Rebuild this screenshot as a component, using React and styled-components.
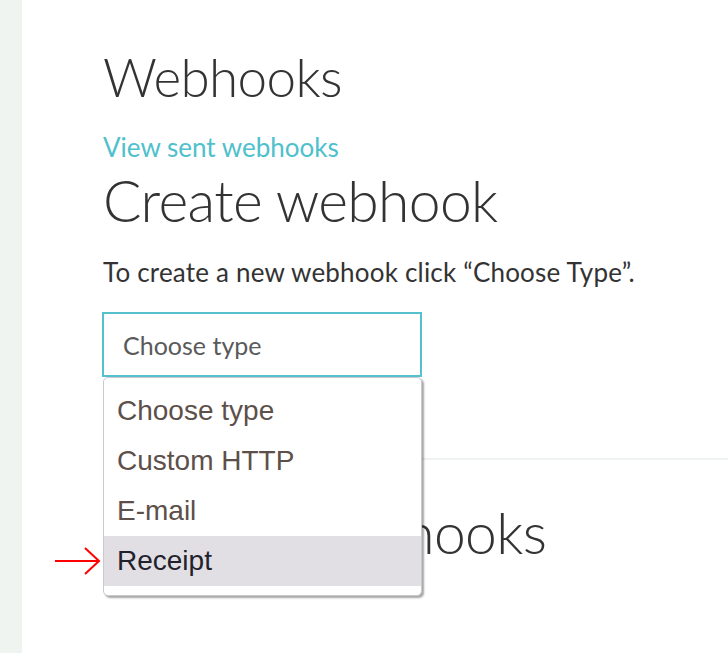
import React from 'react';
import styled, { createGlobalStyle } from 'styled-components';

const GlobalStyle = createGlobalStyle`
  html, body {
    margin: 0;
    padding: 0;
    background: #fff;
  }
  body {
    font-family: Lato, 'Open Sans', sans-serif;
    color: #333;
  }
`;

// Layout
const Page = styled.div`
  display: flex;
  min-height: 653px;
  overflow: hidden;
`;

const Sidebar = styled.div`
  flex: 0 0 22px;
  background: #eff4f1;
`;

const Main = styled.div`
  flex: 1;
  padding: 45px 0 0 81px;
`;

const Title = styled.h1`
  font-family: Lato, sans-serif;
  font-weight: 300;
  font-size: ${p => p.size}px;
  line-height: 1.2;
  margin: ${p => p.gap || 0}px 0 0;
  color: #333;
  letter-spacing: -0.65px;
  white-space: nowrap;
`;

const Link = styled.a`
  display: block;
  margin: 23px 0 0;
  font-family: Lato, sans-serif;
  font-size: 26px;
  line-height: 1.2;
  color: #4fc0cc;
  text-decoration: none;
`;

const Intro = styled.p`
  margin: 23px 0 24px;
  font-family: Lato, sans-serif;
  font-size: 26px;
  line-height: 1.2;
  color: #333;
  letter-spacing: 0.2px;
`;

// Select with its open list
const SelectWrap = styled.div`
  position: relative;
  width: 320px;
  margin-left: -1px;
`;

const SelectBox = styled.div`
  box-sizing: border-box;
  height: 65px;
  border: 2px solid #56c1cc;
  padding: 0 19px;
  display: flex;
  align-items: center;
  font-family: Lato, sans-serif;
  font-size: 25px;
  color: #5a5a5a;
`;

const Menu = styled.ul`
  position: absolute;
  top: 65px;
  left: 1px;
  width: 319px;
  box-sizing: border-box;
  margin: 0;
  padding: 8px 0 9px;
  list-style: none;
  background: #fff;
  border: 1px solid #c9c9ce;
  border-radius: 5px;
  box-shadow: 2px 2px 2px rgba(0, 0, 0, 0.35);
  z-index: 5;
`;

const Option = styled.li`
  position: relative;
  height: 50px;
  display: flex;
  align-items: center;
  padding: 0 13px;
  font-family: 'Liberation Sans', Arial, sans-serif;
  font-size: 28px;
  color: ${p => (p.active ? '#22222c' : '#5d504a')};
  background: ${p => (p.active ? '#e1dfe4' : 'transparent')};
`;

const Arrow = styled.svg`
  position: absolute;
  left: -49px;
  top: 50%;
  margin-top: -15px;
`;

const Divider = styled.hr`
  border: 0;
  border-top: 2px solid #eef2f0;
  margin: 81px 0 0;
`;

const Lower = styled.div`
  padding-top: 38px;
`;

const options = ['Choose type', 'Custom HTTP', 'E-mail', 'Receipt'];

const App = () => (
  <Page>
    <GlobalStyle />
    <Sidebar />
    <Main>
      <Title size={53}>Webhooks</Title>
      <Link href="#">View sent webhooks</Link>
      <Title size={57} gap={3}>Create webhook</Title>
      <Intro>To create a new webhook click “Choose Type”.</Intro>
      <SelectWrap>
        <SelectBox>Choose type</SelectBox>
        <Menu>
          {options.map(o => (
            <Option key={o} active={o === 'Receipt'}>
              {o === 'Receipt' && (
                <Arrow width="46" height="30" viewBox="0 0 46 30">
                  <path d="M0 15 H44 M30 2 L44 15 L30 28" stroke="#f00" strokeWidth="2" fill="none" />
                </Arrow>
              )}
              {o}
            </Option>
          ))}
        </Menu>
      </SelectWrap>
      <Divider />
      <Lower>
        <Title size={57}>Existing webhooks</Title>
      </Lower>
    </Main>
  </Page>
);

export default App;
